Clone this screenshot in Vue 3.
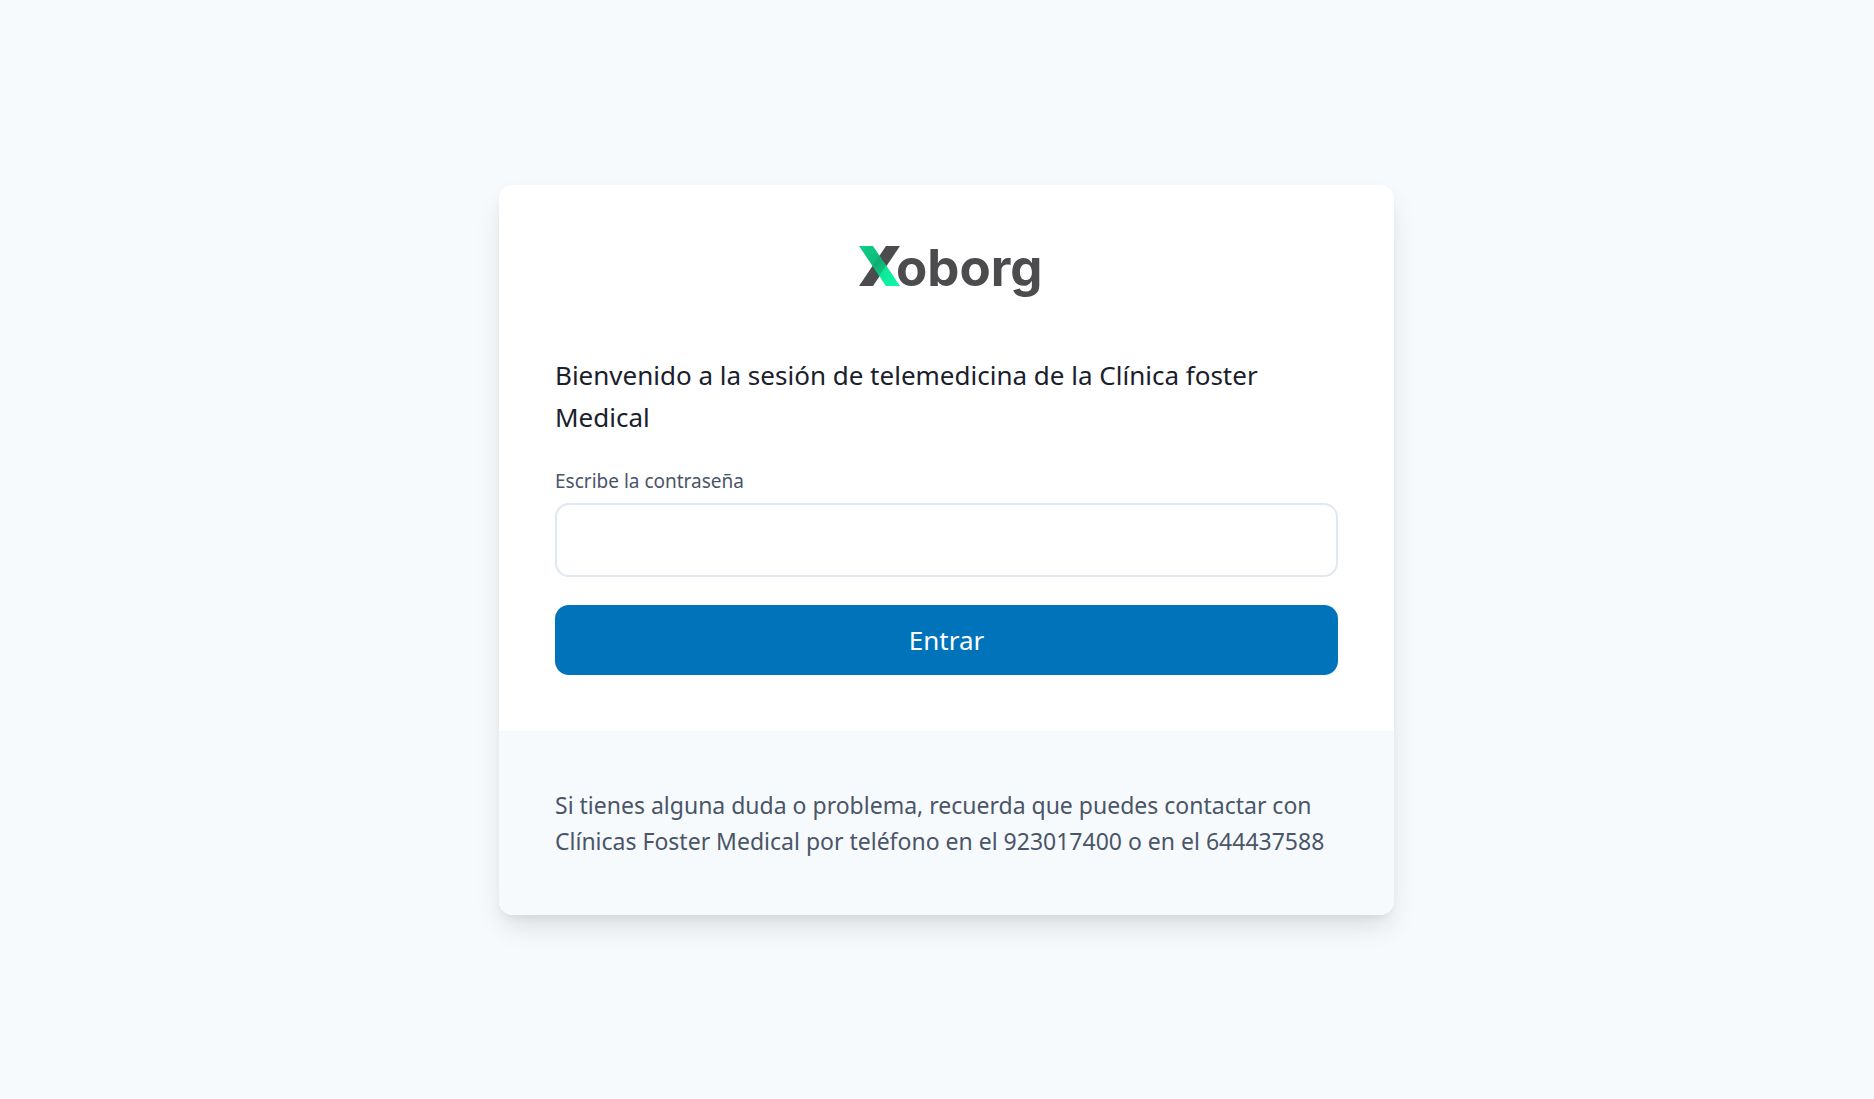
<script setup>
import { ref } from 'vue'

const password = ref('')
</script>

<template>
  <main class="page">
    <section class="card">
      <form class="access" @submit.prevent>
        <svg class="logo" viewBox="-6 -8 192 70" role="img" aria-label="Xoborg">
          <defs>
            <linearGradient id="stroke-green" x1="0" y1="0" x2="1" y2="1">
              <stop offset="0" stop-color="#11cf8a" />
              <stop offset="0.45" stop-color="#0cb877" />
              <stop offset="0.6" stop-color="#0fe696" />
              <stop offset="1" stop-color="#0cf9ae" />
            </linearGradient>
          </defs>
          <polygon points="29,5 43,5 16,45 2,45" fill="#4c4c4e" />
          <polygon points="2,5 16,5 43,45 29,45" fill="url(#stroke-green)" />
          <polygon points="22,14 29,25 22,35 16,25" fill="#12a970" opacity="0.6" />
          <text x="39" y="45" class="wordmark">oborg</text>
        </svg>
        <h1 class="title">Bienvenido a la sesión de telemedicina de la Clínica foster Medical</h1>
        <label class="label" for="password">Escribe la contraseña</label>
        <input id="password" v-model="password" class="field" type="password" />
        <button class="submit" type="submit">Entrar</button>
      </form>
      <footer class="help">
        <p>Si tienes alguna duda o problema, recuerda que puedes contactar con Clínicas Foster Medical por teléfono en el 923017400 o en el 644437588</p>
      </footer>
    </section>
  </main>
</template>

<style>
body {
  margin: 0;
  background: #f6fafd;
}
</style>

<style scoped>
.page {
  box-sizing: border-box;
  min-height: 100vh;
  display: flex;
  align-items: center;
  justify-content: center;
  padding-left: 19px;
  font-family: "Noto Sans", "Open Sans", sans-serif;
  color: #1a202c;
}

.card {
  width: 100%;
  max-width: 895px;
  overflow: hidden;
  border-radius: 14px;
  background: #fff;
  box-shadow: 0 14px 28px -4px rgba(0, 0, 0, 0.12), 0 6px 8px -3px rgba(0, 0, 0, 0.05);
}

.access {
  display: flex;
  flex-direction: column;
  padding: 48px 56px 56px;
}

.logo {
  align-self: center;
  width: 192px;
  height: 70px;
  margin-bottom: 51px;
}

.wordmark {
  font-family: Inter, sans-serif;
  font-size: 51px;
  font-weight: 700;
  fill: #4c4c4e;
}

.title {
  margin: 0 0 28px;
  font-size: 26px;
  font-weight: 400;
  line-height: 42px;
}

.label {
  margin-bottom: 7px;
  font-size: 19px;
  line-height: 30px;
  color: #4a5568;
}

.field {
  box-sizing: border-box;
  width: 100%;
  height: 74px;
  margin-bottom: 28px;
  padding: 14px 20px;
  border: 2px solid #e2e8f0;
  border-radius: 14px;
  background: #fff;
  color: inherit;
  font: inherit;
  font-size: 23px;
}

.submit {
  height: 70px;
  border: 0;
  border-radius: 14px;
  background: #0073bb;
  color: #fff;
  font: inherit;
  font-size: 26px;
  cursor: pointer;
}

.help {
  padding: 56px;
  background: #f6fafd;
  color: #4a5568;
}

.help p {
  margin: 0;
  font-size: 23px;
  line-height: 36px;
}
</style>
